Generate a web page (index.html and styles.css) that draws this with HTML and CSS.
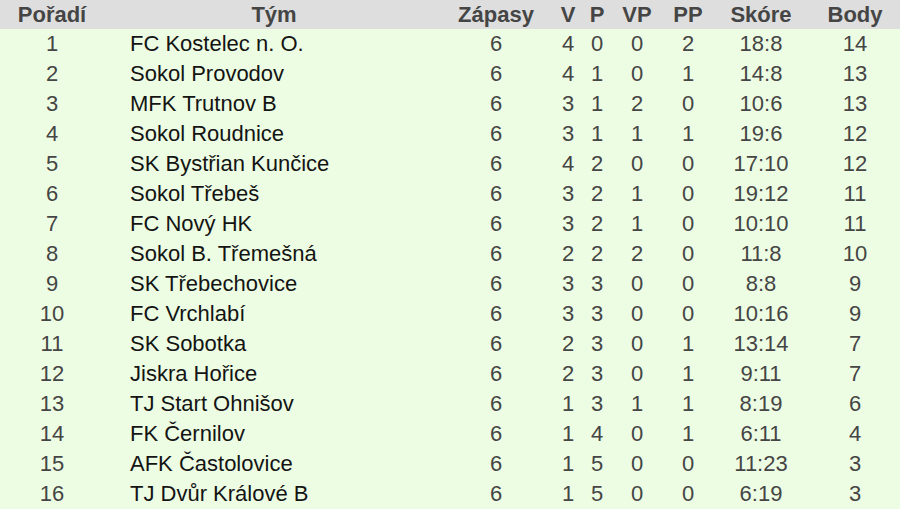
FILE: index.html
```html
<!DOCTYPE html>
<html lang="cs">
<head>
<meta charset="utf-8">
<title>Tabulka</title>
<link rel="stylesheet" href="styles.css">
</head>
<body>
<table class="standings">
  <colgroup>
    <col class="c-rank"><col class="c-team"><col class="c-played"><col class="c-w"><col class="c-l"><col class="c-wo"><col class="c-lo"><col class="c-score"><col class="c-pts">
  </colgroup>
  <thead>
    <tr><th>Pořadí</th><th>Tým</th><th>Zápasy</th><th>V</th><th>P</th><th>VP</th><th>PP</th><th>Skóre</th><th>Body</th></tr>
  </thead>
  <tbody>
    <tr><td>1</td><td class="team">FC Kostelec n. O.</td><td>6</td><td>4</td><td>0</td><td>0</td><td>2</td><td>18:8</td><td>14</td></tr>
    <tr><td>2</td><td class="team">Sokol Provodov</td><td>6</td><td>4</td><td>1</td><td>0</td><td>1</td><td>14:8</td><td>13</td></tr>
    <tr><td>3</td><td class="team">MFK Trutnov B</td><td>6</td><td>3</td><td>1</td><td>2</td><td>0</td><td>10:6</td><td>13</td></tr>
    <tr><td>4</td><td class="team">Sokol Roudnice</td><td>6</td><td>3</td><td>1</td><td>1</td><td>1</td><td>19:6</td><td>12</td></tr>
    <tr><td>5</td><td class="team">SK Bystřian Kunčice</td><td>6</td><td>4</td><td>2</td><td>0</td><td>0</td><td>17:10</td><td>12</td></tr>
    <tr><td>6</td><td class="team">Sokol Třebeš</td><td>6</td><td>3</td><td>2</td><td>1</td><td>0</td><td>19:12</td><td>11</td></tr>
    <tr><td>7</td><td class="team">FC Nový HK</td><td>6</td><td>3</td><td>2</td><td>1</td><td>0</td><td>10:10</td><td>11</td></tr>
    <tr><td>8</td><td class="team">Sokol B. Třemešná</td><td>6</td><td>2</td><td>2</td><td>2</td><td>0</td><td>11:8</td><td>10</td></tr>
    <tr><td>9</td><td class="team">SK Třebechovice</td><td>6</td><td>3</td><td>3</td><td>0</td><td>0</td><td>8:8</td><td>9</td></tr>
    <tr><td>10</td><td class="team">FC Vrchlabí</td><td>6</td><td>3</td><td>3</td><td>0</td><td>0</td><td>10:16</td><td>9</td></tr>
    <tr><td>11</td><td class="team">SK Sobotka</td><td>6</td><td>2</td><td>3</td><td>0</td><td>1</td><td>13:14</td><td>7</td></tr>
    <tr><td>12</td><td class="team">Jiskra Hořice</td><td>6</td><td>2</td><td>3</td><td>0</td><td>1</td><td>9:11</td><td>7</td></tr>
    <tr><td>13</td><td class="team">TJ Start Ohnišov</td><td>6</td><td>1</td><td>3</td><td>1</td><td>1</td><td>8:19</td><td>6</td></tr>
    <tr><td>14</td><td class="team">FK Černilov</td><td>6</td><td>1</td><td>4</td><td>0</td><td>1</td><td>6:11</td><td>4</td></tr>
    <tr><td>15</td><td class="team">AFK Častolovice</td><td>6</td><td>1</td><td>5</td><td>0</td><td>0</td><td>11:23</td><td>3</td></tr>
    <tr><td>16</td><td class="team">TJ Dvůr Králové B</td><td>6</td><td>1</td><td>5</td><td>0</td><td>0</td><td>6:19</td><td>3</td></tr>
  </tbody>
</table>
</body>
</html>
```
FILE: styles.css
```css
html, body {
  margin: 0;
  padding: 0;
  background: #ffffff;
}

.standings {
  width: 900px;
  table-layout: fixed;
  border-collapse: collapse;
  border-spacing: 0;
  font-family: "Liberation Sans", Arial, sans-serif;
  font-size: 22px;
}

.c-rank { width: 104px; }
.c-team { width: 340px; }
.c-played { width: 104px; }
.c-w { width: 40px; }
.c-l { width: 18px; }
.c-wo { width: 62px; }
.c-lo { width: 40px; }
.c-score { width: 106px; }
.c-pts { width: 86px; }

.standings th,
.standings td {
  padding: 0;
  text-align: center;
  white-space: nowrap;
  overflow: visible;
}

.standings th:last-child,
.standings td:last-child {
  padding-right: 4px;
}

.standings thead tr {
  height: 29px;
  background: #dedede;
}

.standings th {
  font-weight: bold;
  color: #454545;
  line-height: 29px;
}

.standings tbody tr {
  height: 30px;
  background: #edfde3;
}

.standings td {
  color: #454545;
  line-height: 30px;
}

.standings td.team {
  text-align: left;
  padding-left: 26px;
  color: #141414;
}
```
